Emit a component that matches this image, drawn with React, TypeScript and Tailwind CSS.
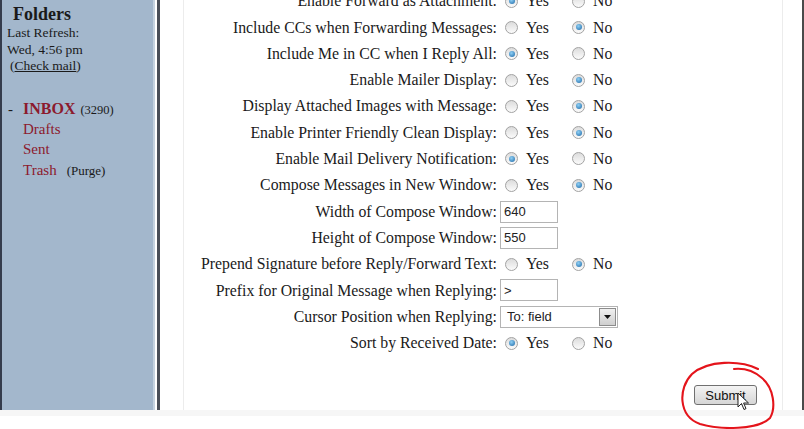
import type { ReactNode } from "react";

type Row =
  | { label: string; kind: "radio"; yes: boolean }
  | { label: string; kind: "text"; value: string }
  | { label: string; kind: "select"; value: string };

const rows: Row[] = [
  { label: "Enable Forward as Attachment:", kind: "radio", yes: true },
  { label: "Include CCs when Forwarding Messages:", kind: "radio", yes: false },
  { label: "Include Me in CC when I Reply All:", kind: "radio", yes: true },
  { label: "Enable Mailer Display:", kind: "radio", yes: false },
  { label: "Display Attached Images with Message:", kind: "radio", yes: false },
  { label: "Enable Printer Friendly Clean Display:", kind: "radio", yes: false },
  { label: "Enable Mail Delivery Notification:", kind: "radio", yes: true },
  { label: "Compose Messages in New Window:", kind: "radio", yes: false },
  { label: "Width of Compose Window:", kind: "text", value: "640" },
  { label: "Height of Compose Window:", kind: "text", value: "550" },
  { label: "Prepend Signature before Reply/Forward Text:", kind: "radio", yes: false },
  { label: "Prefix for Original Message when Replying:", kind: "text", value: ">" },
  { label: "Cursor Position when Replying:", kind: "select", value: "To: field" },
  { label: "Sort by Received Date:", kind: "radio", yes: true },
];

function Radio({ on }: { on: boolean }) {
  return (
    <span className="flex h-[13px] w-[13px] shrink-0 items-center justify-center rounded-full border border-[#a2a2a2] bg-linear-to-b from-[#dcdcdc] to-[#fbfbfb]">
      {on ? (
        <span className="h-[6px] w-[6px] rounded-full bg-[radial-gradient(circle_at_40%_35%,#8fd0f5,#1c67a6)]" />
      ) : null}
    </span>
  );
}

function YesNo({ yes }: { yes: boolean }) {
  return (
    <div className="flex items-center">
      <span className="flex w-[72px] items-center pl-[5px]">
        <Radio on={yes} />
        <span className="ml-[8px]">Yes</span>
      </span>
      <span className="flex items-center">
        <Radio on={!yes} />
        <span className="ml-[8px]">No</span>
      </span>
    </div>
  );
}

function Field({ children, w }: { children: ReactNode; w: string }) {
  return (
    <div
      className={`flex h-[22px] items-center border border-[#b4b4b4] bg-white font-['Liberation_Sans',Arial,sans-serif] text-[13px] text-[#222] ${w}`}
    >
      {children}
    </div>
  );
}

function Control({ row }: { row: Row }) {
  if (row.kind === "radio") return <YesNo yes={row.yes} />;
  if (row.kind === "text")
    return (
      <Field w="w-[58px]">
        <span className="pl-[3px]">{row.value}</span>
      </Field>
    );
  return (
    <Field w="w-[118px]">
      <span className="flex-1 pl-[6px]">{row.value}</span>
      <span className="mr-[1px] flex h-[18px] w-[17px] items-center justify-center border border-[#8c8c8c] bg-linear-to-b from-[#f0f0f0] to-[#cfcfcf]">
        <svg width="7" height="4" viewBox="0 0 7 4">
          <path d="M0 0h7L3.5 4z" fill="#111" />
        </svg>
      </span>
    </Field>
  );
}

function Sidebar() {
  return (
    <div className="flex w-[155px] shrink-0 border-l-2 border-[#353c4c] bg-[#a3b7cc] font-['Liberation_Serif','Times_New_Roman',serif] text-[#1a1a1a]">
      <div className="flex-1 pl-[5px] pt-[3px]">
        <div className="pl-[6px] text-[18px] font-bold leading-[22px]">Folders</div>
        <div className="text-[13.5px] leading-[16.5px]">
          <div>Last Refresh:</div>
          <div>Wed, 4:56 pm</div>
          <div className="pl-[3px]">
            (<span className="underline">Check mail</span>)
          </div>
        </div>
        <div className="mt-[24px] text-[15px] leading-[20.5px] text-[#8c1a2d]">
          <div className="flex h-[20px] items-baseline">
            <span className="w-[16px] pl-[1px] text-[#1a1a1a]">-</span>
            <span className="text-[16px] font-bold">INBOX</span>
            <span className="ml-[5px] text-[12.5px] text-[#1a1a1a]">(3290)</span>
          </div>
          <div className="pl-[16px]">Drafts</div>
          <div className="pl-[16px]">Sent</div>
          <div className="flex items-baseline pl-[16px]">
            <span>Trash</span>
            <span className="ml-[10px] text-[13px] text-[#1a1a1a]">(Purge)</span>
          </div>
        </div>
      </div>
      <div className="w-[2px] bg-[#c5d2df]" />
    </div>
  );
}

export default function App() {
  return (
    <div className="relative h-[429px] w-[804px] overflow-hidden bg-white">
      <div className="flex h-[410px]">
        <Sidebar />
        <div className="w-[2px] bg-white" />
        <div className="w-[3px] bg-[#4a4f58]" />
        <div className="w-[23px] bg-white" />
        <div className="w-[1px] bg-[#ececec]" />
        <div className="flex w-[598px] flex-col font-['Liberation_Serif','Times_New_Roman',serif] text-[15.8px] text-[#1a1a1a]">
          <div className="-mt-[12px] grid grid-cols-[313px_1fr] gap-x-[3px]">
            {rows.map((r) => (
              <div key={r.label} className="contents">
                <div className="flex h-[26.3px] items-center justify-end whitespace-nowrap">
                  {r.label}
                </div>
                <div className="flex h-[26.3px] items-center">
                  <Control row={r} />
                </div>
              </div>
            ))}
          </div>
          <div className="mt-[29px] flex justify-end pr-[25px]">
            <button className="h-[20px] w-[63px] rounded-[3px] border border-[#707070] bg-linear-to-b from-[#f4f4f4] to-[#d6d6d6] font-['Liberation_Sans',Arial,sans-serif] text-[13px] text-[#111]">
              Submit
            </button>
          </div>
        </div>
        <div className="w-[1px] bg-[#ececec]" />
        <div className="w-[19px] bg-white" />
        <div className="w-[2px] bg-[#4a4a4a]" />
      </div>
      <div className="h-[6px] bg-[#f6f6f6]" />

      <svg
        className="pointer-events-none absolute left-[678px] top-[358px]"
        width="100"
        height="72"
        viewBox="0 0 100 72"
      >
        <path
          d="M80 11 C62 2, 30 2, 14 16 C0 30, 0 58, 22 66 C42 72, 80 72, 92 60 C98 50, 96 30, 84 20 C76 13, 66 10, 56 11"
          fill="none"
          stroke="#e4141b"
          strokeWidth="2.1"
          strokeLinecap="round"
        />
      </svg>
      <svg
        className="pointer-events-none absolute left-[737px] top-[392px]"
        width="13"
        height="19"
        viewBox="0 0 13 19"
      >
        <path
          d="M1 1 L1 15 L4.5 11.5 L7 17.5 L9 16.6 L6.6 11 L11.5 11 Z"
          fill="#fff"
          stroke="#222"
          strokeWidth="1"
          strokeLinejoin="round"
        />
      </svg>
    </div>
  );
}
